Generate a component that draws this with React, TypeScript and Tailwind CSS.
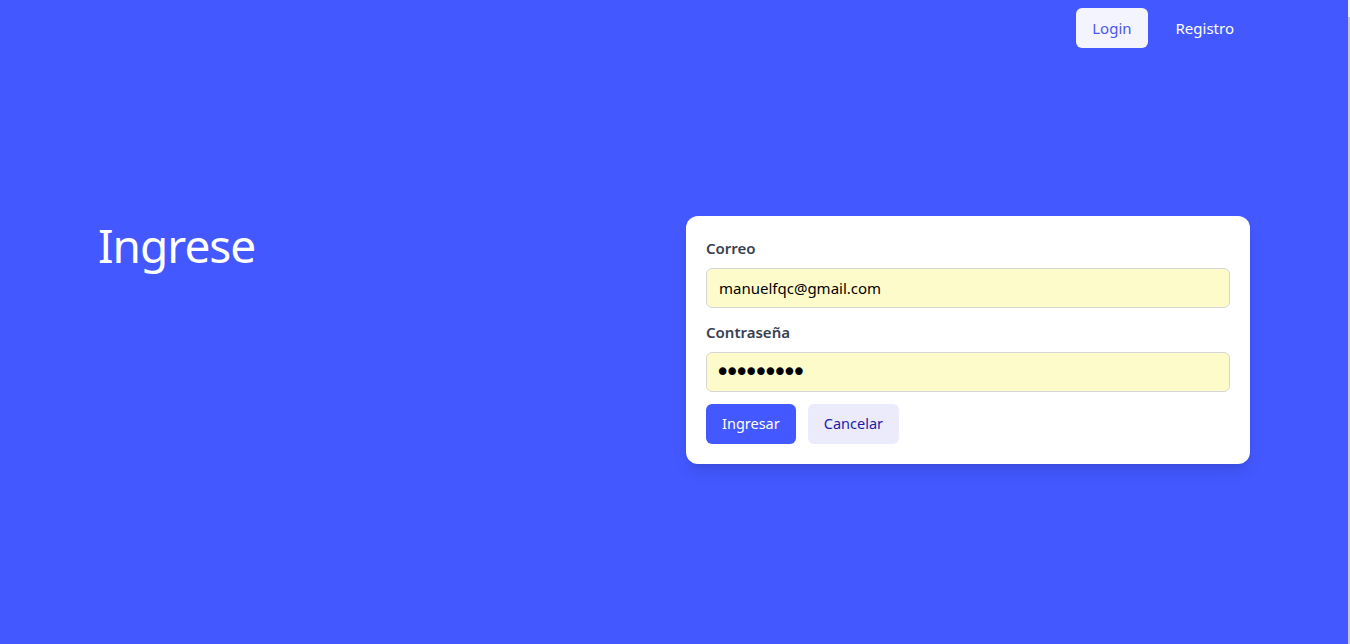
import React from 'react';

export default function App() {
  return (
    <div className="flex min-h-[644px] w-full bg-[#4358ff]" style={{ fontFamily: '"Noto Sans", "Open Sans", sans-serif' }}>
      <div className="flex-1">
        {/* Top nav */}
        <nav className="mx-auto flex max-w-6xl justify-end gap-3 pt-2">
          <button className="h-10 rounded-md bg-[#f4f4ff] px-4 text-[15px] text-[#4a58e6]">Login</button>
          <button className="h-10 rounded-md px-4 text-[15px] text-white">Registro</button>
        </nav>

        {/* Main */}
        <main className="mx-auto mt-[168px] grid max-w-6xl grid-cols-2 gap-6">
          <div>
            <h1 className="mt-[6px] text-[46px] leading-none tracking-[-1px] text-white">Ingrese</h1>
          </div>

          <form className="rounded-xl bg-white p-5 shadow-lg">
            <div className="mb-3">
              <label className="mb-2 block text-[15px] font-semibold leading-6 text-[#374151]">Correo</label>
              <input
                type="email"
                defaultValue="manuelfqc@gmail.com"
                className="h-10 w-full rounded-md border border-[#d6d6d6] bg-[#fefbcb] px-3 text-[15px] text-black outline-none"
              />
            </div>
            <div className="mb-3">
              <label className="mb-2 block text-[15px] font-semibold leading-6 text-[#374151]">Contraseña</label>
              <input
                type="password"
                defaultValue="123456789"
                className="h-10 w-full rounded-md border border-[#d6d6d6] bg-[#fefbcb] pl-2 pr-3 font-['DejaVu_Sans',sans-serif] text-[26px] tracking-[-5.8px] text-black outline-none"
              />
            </div>
            <div className="flex gap-3">
              <button type="button" className="h-10 rounded-md bg-[#4358ff] px-4 text-[14.5px] text-white">Ingresar</button>
              <button type="button" className="h-10 rounded-md bg-[#ebebfc] px-4 text-[14.5px] text-[#1c1ca8]">Cancelar</button>
            </div>
          </form>
        </main>
      </div>

      {/* scrollbar edge */}
      <div className="flex w-[2px] flex-col">
        <div className="h-[17px] bg-[#f1f1f1]" />
        <div className="flex-1 bg-[#c8c8c8]" />
      </div>
    </div>
  );
}
